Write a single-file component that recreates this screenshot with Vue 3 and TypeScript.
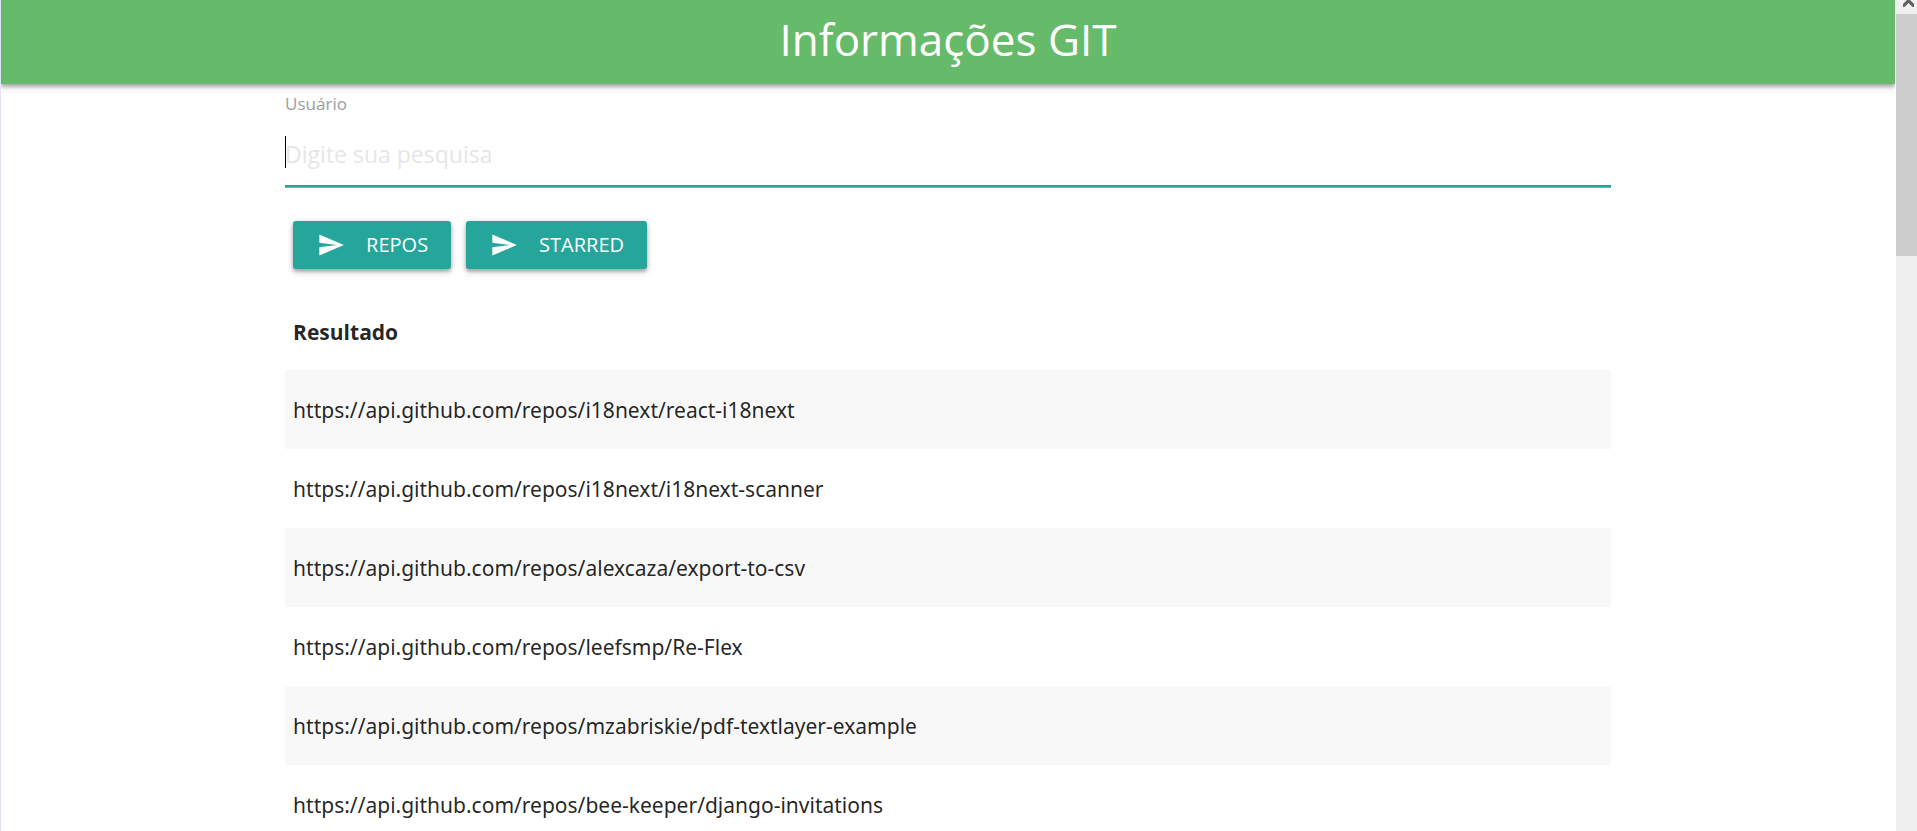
<script setup lang="ts">
import { ref } from 'vue'

const user = ref('')

const actions: string[] = ['Repos', 'Starred']

const results: string[] = [
  'https://api.github.com/repos/i18next/react-i18next',
  'https://api.github.com/repos/i18next/i18next-scanner',
  'https://api.github.com/repos/alexcaza/export-to-csv',
  'https://api.github.com/repos/leefsmp/Re-Flex',
  'https://api.github.com/repos/mzabriskie/pdf-textlayer-example',
  'https://api.github.com/repos/bee-keeper/django-invitations',
]
</script>

<template>
  <div class="window">
    <div class="page">
      <header class="nav">
        <h1 class="title">Informações GIT</h1>
      </header>

      <main class="container">
        <form class="search" @submit.prevent>
          <label class="label" for="user">Usuário</label>
          <div class="field">
            <input id="user" v-model="user" class="input" type="text" placeholder="Digite sua pesquisa" autocomplete="off" />
            <span class="caret" aria-hidden="true"></span>
          </div>
          <div class="actions">
            <button v-for="action in actions" :key="action" class="btn" type="button">
              <svg class="icon" viewBox="0 0 24 24" aria-hidden="true">
                <path d="M2.01 21L23 12 2.01 3 2 10l15 2-15 2z" />
              </svg>
              <span>{{ action }}</span>
            </button>
          </div>
        </form>

        <table class="table">
          <thead>
            <tr>
              <th scope="col">Resultado</th>
            </tr>
          </thead>
          <tbody>
            <tr v-for="url in results" :key="url">
              <td>{{ url }}</td>
            </tr>
          </tbody>
        </table>
      </main>
    </div>

    <div class="scrollbar" aria-hidden="true">
      <div class="scroll-up">
        <svg class="chevron" viewBox="0 0 11 7">
          <path d="M0 4 L5.500 -1.500 L11 4 L11 7 L9.500 7 L5.500 3 L1.500 7 L0 7 Z" />
        </svg>
      </div>
      <div class="thumb"></div>
    </div>
  </div>
</template>

<style>
html,
body {
  margin: 0;
  background: #fff;
}
</style>

<style scoped>
.window {
  display: flex;
  height: 100vh;
  overflow: hidden;
  box-sizing: border-box;
  border-left: 1px solid #e0e4f8;
  font-family: 'Segoe UI', 'Open Sans', 'Noto Sans', sans-serif;
  font-size: 21px;
  color: rgba(0, 0, 0, 0.87);
}

.page {
  flex: 1;
  min-width: 0;
  margin-right: 1px;
  overflow: hidden;
}

.nav {
  display: flex;
  justify-content: center;
  align-items: center;
  height: 84px;
  padding-bottom: 6px;
  box-sizing: border-box;
  background: #66bb6a;
  box-shadow: 0 3px 3px 0 rgba(0, 0, 0, 0.14), 0 4px 7px 0 rgba(0, 0, 0, 0.12),
    0 1px 5px 0 rgba(0, 0, 0, 0.2);
}

.title {
  margin: 0;
  font-size: 44px;
  font-weight: 400;
  line-height: 60px;
  color: #fff;
}

.container {
  width: 70%;
  margin: 0 auto;
}

.label {
  display: block;
  padding-top: 8px;
  font-size: 17px;
  line-height: 24px;
  color: #9e9e9e;
}

.field {
  position: relative;
}

.input {
  display: block;
  width: 100%;
  height: 71px;
  box-sizing: border-box;
  padding: 6px 0 0;
  border: 0;
  border-bottom: 2px solid #26a69a;
  box-shadow: 0 1px 0 0 #63c0b7;
  outline: 0;
  background: transparent;
  font: inherit;
  font-size: 23px;
  color: inherit;
}

.input::placeholder {
  color: #e6e6e6;
  opacity: 1;
}

.caret {
  position: absolute;
  top: 20px;
  left: 0;
  width: 1px;
  height: 32px;
  background: #000;
}

.actions {
  display: flex;
  gap: 15px;
  padding: 34px 8px 24px;
}

.btn {
  display: flex;
  align-items: center;
  gap: 21px;
  height: 48px;
  padding: 0 23px 0 24px;
  border: 0;
  border-radius: 3px;
  background: #26a69a;
  box-shadow: 0 3px 3px 0 rgba(0, 0, 0, 0.14), 0 4px 7px 0 rgba(0, 0, 0, 0.12),
    0 1px 5px 0 rgba(0, 0, 0, 0.2);
  font-family: inherit;
  font-size: 20px;
  line-height: 48px;
  text-transform: uppercase;
  color: #fff;
}

.icon {
  width: 28px;
  height: 28px;
  fill: currentColor;
}

.table {
  width: 100%;
  border-collapse: collapse;
}

.table th,
.table td {
  padding: 0 8px;
  text-align: left;
  line-height: 32px;
}

.table th {
  height: 77px;
  font-weight: 700;
}

.table td {
  height: 79px;
  font-family: 'Segoe UI', 'Noto Sans', 'Open Sans', sans-serif;
}

.table tbody tr:nth-child(odd) {
  background: #f8f8f8;
}

.scrollbar {
  flex: none;
  width: 21px;
  background: #f0f0f0;
}

.scroll-up {
  display: flex;
  justify-content: center;
  align-items: flex-start;
  height: 14px;
  padding-left: 4px;
}

.chevron {
  width: 11px;
  height: 7px;
  fill: #606060;
}

.thumb {
  height: 242px;
  background: #cdcdcd;
}
</style>
